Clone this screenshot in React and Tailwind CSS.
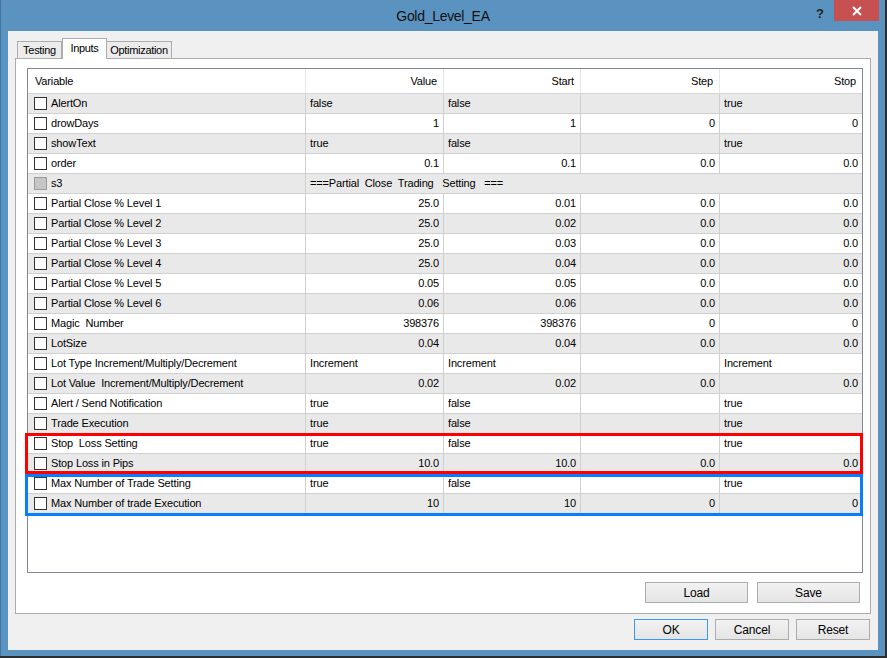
import React from "react";

const rows = [
  { name: "AlertOn", v: ["false", "false", "", "true"], num: false },
  { name: "drowDays", v: ["1", "1", "0", "0"], num: true },
  { name: "showText", v: ["true", "false", "", "true"], num: false },
  { name: "order", v: ["0.1", "0.1", "0.0", "0.0"], num: true },
  { name: "s3", span: "===Partial  Close  Trading   Setting   ===", disabled: true },
  { name: "Partial Close % Level 1", v: ["25.0", "0.01", "0.0", "0.0"], num: true },
  { name: "Partial Close % Level 2", v: ["25.0", "0.02", "0.0", "0.0"], num: true },
  { name: "Partial Close % Level 3", v: ["25.0", "0.03", "0.0", "0.0"], num: true },
  { name: "Partial Close % Level 4", v: ["25.0", "0.04", "0.0", "0.0"], num: true },
  { name: "Partial Close % Level 5", v: ["0.05", "0.05", "0.0", "0.0"], num: true },
  { name: "Partial Close % Level 6", v: ["0.06", "0.06", "0.0", "0.0"], num: true },
  { name: "Magic  Number", v: ["398376", "398376", "0", "0"], num: true },
  { name: "LotSize", v: ["0.04", "0.04", "0.0", "0.0"], num: true },
  { name: "Lot Type Increment/Multiply/Decrement", v: ["Increment", "Increment", "", "Increment"], num: false },
  { name: "Lot Value  Increment/Multiply/Decrement", v: ["0.02", "0.02", "0.0", "0.0"], num: true },
  { name: "Alert / Send Notification", v: ["true", "false", "", "true"], num: false },
  { name: "Trade Execution", v: ["true", "false", "", "true"], num: false },
  { name: "Stop  Loss Setting", v: ["true", "false", "", "true"], num: false },
  { name: "Stop Loss in Pips", v: ["10.0", "10.0", "0.0", "0.0"], num: true },
  { name: "Max Number of Trade Setting", v: ["true", "false", "", "true"], num: false },
  { name: "Max Number of trade Execution", v: ["10", "10", "0", "0"], num: true },
];

const colW = ["w-[138px]", "w-[137px]", "w-[139px]", "w-[142px]"];

const Button = ({ children, w = "w-[103px]", focus }) => (
  <div
    className={`${w} h-[21px] flex items-center justify-center border bg-gradient-to-b from-[#f2f2f2] to-[#e5e5e5] text-[12px] text-black ${
      focus ? "border-[#3399ff]" : "border-[#acacac]"
    }`}
  >
    {children}
  </div>
);

const Row = ({ row, i }) => {
  const bg = i % 2 === 0 ? "bg-[#e9e9e9]" : "bg-white";
  return (
    <div className={`flex h-[20px] border-b border-[#d0d0d0] ${bg}`}>
      <div className="w-[278px] flex items-center border-r border-[#d0d0d0]">
        <div
          className={`ml-[6px] w-[13px] h-[13px] border ${
            row.disabled ? "bg-[#c6c6c6] border-[#9a9a9a]" : "bg-white border-[#333]"
          }`}
        />
        <span className="ml-[4px] whitespace-pre">{row.name}</span>
      </div>
      {row.span ? (
        <div className="flex-1 flex items-center pl-[4px] whitespace-pre">{row.span}</div>
      ) : (
        row.v.map((val, j) => (
          <div
            key={j}
            className={`${colW[j]} flex items-center ${row.num ? "justify-end pr-[4px]" : "pl-[4px]"} ${
              j < 3 ? "border-r border-[#d0d0d0]" : ""
            }`}
          >
            {val}
          </div>
        ))
      )}
    </div>
  );
};

export default function App() {
  return (
    <div className="w-[887px] h-[658px] bg-[#2d2d2d] font-['Liberation_Sans',Arial,sans-serif] text-black overflow-hidden">
      <div className="w-[885px] h-[656px] bg-[#5a93bf] border-l border-[#46739b] flex flex-col">
        {/* Title bar */}
        <div className="h-[31px] relative flex items-center justify-center">
          <span className="text-[14px] tracking-[-0.3px] text-[#111] mt-[1px]">Gold_Level_EA</span>
          <span className="absolute left-[815px] top-[4px] text-[13px] font-bold text-[#222]">?</span>
          <div className="absolute left-[833px] top-0 w-[45px] h-[21px] bg-[#c75050] flex items-center justify-center">
            <svg width="10" height="10" viewBox="0 0 10 10">
              <path d="M1 1L9 9M9 1L1 9" stroke="white" strokeWidth="2" />
            </svg>
          </div>
        </div>

        {/* Client area */}
        <div className="ml-[7px] w-[870px] h-[619px] bg-[#f0f0f0] flex flex-col px-[7px] pt-[7px] text-[11px] tracking-[-0.15px]">
          {/* Tabs */}
          <div className="h-[20px] flex items-end pl-[2px] text-[11px] tracking-[-0.3px]">
            <div className="w-[45px] h-[17px] border border-b-0 border-[#acacac] bg-[#ececec] flex items-center justify-center">
              Testing
            </div>
            <div className="w-[45px] h-[21px] -mb-px border border-b-0 border-[#acacac] bg-white flex items-center justify-center relative z-10 pb-[2px]">
              Inputs
            </div>
            <div className="w-[65px] h-[17px] border border-b-0 border-l-0 border-[#acacac] bg-[#ececec] flex items-center justify-center">
              Optimization
            </div>
          </div>

          {/* Panel */}
          <div className="w-[856px] h-[556px] border border-[#acacac] bg-white pt-[9px] pl-[11px] flex flex-col">
            <div className="w-[836px] h-[505px] border border-[#828790] bg-white relative">
              {/* Header */}
              <div className="flex h-[25px] border-b border-[#d5d5d5] bg-white">
                <div className="w-[278px] flex items-center pl-[7px] border-r border-[#e3e8ee]">Variable</div>
                {["Value", "Start", "Step", "Stop"].map((h, j) => (
                  <div
                    key={h}
                    className={`${colW[j]} flex items-center justify-end pr-[6px] ${j < 3 ? "border-r border-[#e3e8ee]" : ""}`}
                  >
                    {h}
                  </div>
                ))}
              </div>
              {rows.map((r, i) => (
                <Row key={r.name} row={r} i={i} />
              ))}

              {/* Highlight boxes */}
              <div className="absolute left-[-3px] top-[364px] w-[838px] h-[41px] border-[3px] border-[#ff0000]" />
              <div className="absolute left-[-3px] top-[405px] w-[838px] h-[42px] border-[3px] border-[#0a7cff]" />
            </div>

            <div className="flex justify-end gap-[9px] pr-[10px] mt-[9px]">
              <Button>Load</Button>
              <Button>Save</Button>
            </div>
          </div>

          {/* Bottom buttons */}
          <div className="flex justify-end gap-[7px] mr-[1px] mt-[5px]">
            <Button w="w-[74px]" focus>
              OK
            </Button>
            <Button w="w-[74px]">Cancel</Button>
            <Button w="w-[74px]">Reset</Button>
          </div>
        </div>
      </div>
    </div>
  );
}
